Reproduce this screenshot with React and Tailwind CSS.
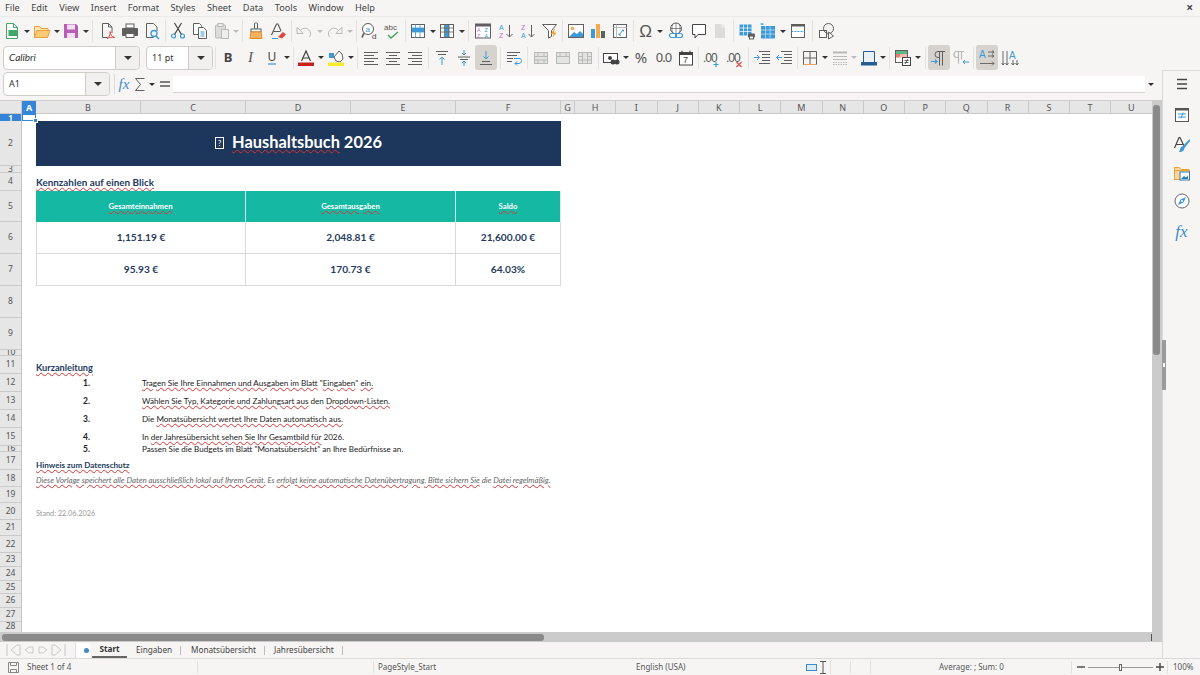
import React from 'react';

const GRAY = '#5f5f5f';
const BLUE = '#3d9ad6';
const LIGHT = '#b9b9b9';

const menus = ['File', 'Edit', 'View', 'Insert', 'Format', 'Styles', 'Sheet', 'Data', 'Tools', 'Window', 'Help'];

const columns = [
  { label: 'B', w: 'w-[105px]' },
  { label: 'C', w: 'w-[105px]' },
  { label: 'D', w: 'w-[105px]' },
  { label: 'E', w: 'w-[105px]' },
  { label: 'F', w: 'w-[105px]' },
  { label: 'G', w: 'w-[14px]' },
  { label: 'H', w: 'w-[41.25px]' },
  { label: 'I', w: 'w-[41.25px]' },
  { label: 'J', w: 'w-[41.25px]' },
  { label: 'K', w: 'w-[41.25px]' },
  { label: 'L', w: 'w-[41.25px]' },
  { label: 'M', w: 'w-[41.25px]' },
  { label: 'N', w: 'w-[41.25px]' },
  { label: 'O', w: 'w-[41.25px]' },
  { label: 'P', w: 'w-[41.25px]' },
  { label: 'Q', w: 'w-[41.25px]' },
  { label: 'R', w: 'w-[41.25px]' },
  { label: 'S', w: 'w-[41.25px]' },
  { label: 'T', w: 'w-[41.25px]' },
  { label: 'U', w: 'w-[41.25px]' },
];

const rows = [
  { n: 2, h: 'h-[45px]' },
  { n: 3, h: 'h-[7px]' },
  { n: 4, h: 'h-[18px]' },
  { n: 5, h: 'h-[31px]' },
  { n: 6, h: 'h-[32px]' },
  { n: 7, h: 'h-[32px]' },
  { n: 8, h: 'h-[32px]' },
  { n: 9, h: 'h-[32px]' },
  { n: 10, h: 'h-[6px]' },
  { n: 11, h: 'h-[18px]' },
  { n: 12, h: 'h-[18px]' },
  { n: 13, h: 'h-[18px]' },
  { n: 14, h: 'h-[18px]' },
  { n: 15, h: 'h-[18px]' },
  { n: 16, h: 'h-[6px]' },
  { n: 17, h: 'h-[18px]' },
  { n: 18, h: 'h-[17px]' },
  { n: 19, h: 'h-[16px]' },
  { n: 20, h: 'h-[17px]' },
  { n: 21, h: 'h-[16px]' },
  { n: 22, h: 'h-[17px]' },
  { n: 23, h: 'h-[14px]' },
  { n: 24, h: 'h-[13.5px]' },
  { n: 25, h: 'h-[13.5px]' },
  { n: 26, h: 'h-[14px]' },
  { n: 27, h: 'h-[13.5px]' },
  { n: 28, h: 'h-[11px]' },
];

// misspelled words get the red squiggle like in the Calc window
const Sp = ({ children }) => (
  <span className="underline decoration-wavy decoration-[#d33] decoration-1 underline-offset-1">{children}</span>
);

const Ic = ({ children }) => (
  <svg width="18" height="18" viewBox="0 0 18 18" fill="none" strokeWidth="1" className="overflow-visible">
    {children}
  </svg>
);

const B = ({ w = 'w-[22px]', active = false, children }) => (
  <div className={`${w} h-[25px] shrink-0 flex items-center justify-center rounded-[3px] ${active ? 'bg-[#d6d3cf]' : ''}`}>
    {children}
  </div>
);

const Dd = ({ w = 'w-[8px]', light = false }) => (
  <div className={`${w} h-[25px] shrink-0 flex items-center justify-center`}>
    <div className={`w-0 h-0 border-x-[3px] border-x-transparent border-t-[3px] ${light ? 'border-t-[#bbb]' : 'border-t-[#333]'}`} />
  </div>
);

const Sep = ({ w = 'w-[5px]' }) => (
  <div className={`${w} h-[24px] shrink-0 flex items-center justify-center`}>
    <div className="w-px h-[22px] bg-[#e4e2df]" />
  </div>
);

const ComboArrow = ({ w }) => (
  <div className={`${w} h-full border-l border-[#d0cdc9] bg-[#f1f0ee] rounded-r-[4px] flex items-center justify-center`}>
    <div className="w-0 h-0 border-x-[4px] border-x-transparent border-t-[4px] border-t-[#333]" />
  </div>
);

const Lines = ({ rows: r }) => (
  <Ic>
    {r.map(([x1, x2, y], i) => (
      <path key={i} d={`M${x1} ${y}H${x2}`} stroke={GRAY} />
    ))}
  </Ic>
);

const TableIcon = ({ kind }) => (
  <Ic>
    <rect x="2.5" y="2.5" width="13" height="13" fill="#fff" stroke={GRAY} />
    {kind === 'row' && <rect x="3" y="6" width="12" height="4" fill={BLUE} />}
    {kind === 'col' && <rect x="7" y="3" width="4" height="12" fill={BLUE} />}
    <path d="M2.5 6h13M2.5 10h13M6.5 2.5v13M11 2.5v13" stroke={kind === 'row' ? BLUE : GRAY} strokeWidth="0.8" />
  </Ic>
);

const MergeIcon = ({ d }) => (
  <Ic>
    <rect x="2.5" y="3.5" width="13" height="11" fill="#e3e3e1" stroke={LIGHT} />
    <path d={d} stroke={LIGHT} />
  </Ic>
);

const Toolbar1 = () => (
  <div className="h-[28px] pl-px flex items-center">
    <B><Ic><path d="M3.5 1.5h7l4 4v11h-11z" fill="#fff" stroke="#43a66b" /><path d="M10.5 1.5v4h4" stroke="#43a66b" /><rect x="5.5" y="8" width="9" height="6" fill="#43a66b" /></Ic></B>
    <Dd />
    <B><Ic><path d="M1.5 15.5v-11h5l1.5 2h7v2" fill="#fde3ad" stroke="#e9a13b" /><path d="M1.5 15.5l2.5-7h13l-2.5 7z" fill="#fcc978" stroke="#e9a13b" /></Ic></B>
    <Dd w="w-[7px]" />
    <B><Ic><path d="M2 2h12l2 2v12H2z" fill="#b75fb5" /><rect x="5" y="2.5" width="8" height="5" fill="#f3dff3" /><rect x="5" y="11" width="8" height="5" fill="#f3dff3" /></Ic></B>
    <Dd />
    <Sep />
    <B w="w-[23px]"><Ic><path d="M4.5 1.5h6l3.5 3.5v6" stroke={GRAY} fill="#fff" /><path d="M4.5 1.5v14h5" stroke={GRAY} /><path d="M10.5 1.5V5H14" stroke={GRAY} /><path d="M9 16.5c3-2 3.5-5 3-7 .5 3 1.5 5 4.5 6-2.500-.5-5.500-.2-7.500 1z" stroke="#d8463f" /></Ic></B>
    <B w="w-[23px]"><Ic><rect x="5" y="2" width="8" height="4" fill="#fff" stroke={GRAY} /><path d="M1.500 6.500h15v7h-3v-2h-9v2h-3z" fill={GRAY} stroke={GRAY} /><rect x="5" y="11.500" width="8" height="4" fill="#fff" stroke={GRAY} /></Ic></B>
    <B><Ic><path d="M3.500 1.500h7l3.500 3.500v4M3.500 1.500v14h7" stroke={GRAY} /><circle cx="11" cy="11.500" r="3" stroke={BLUE} strokeWidth="1.300" /><path d="M13 14l3 3" stroke={BLUE} strokeWidth="1.500" /></Ic></B>
    <Sep w="w-[4px]" />
    <B><Ic><circle cx="4.500" cy="14" r="2" stroke={BLUE} strokeWidth="1.200" /><circle cx="13.500" cy="14" r="2" stroke={BLUE} strokeWidth="1.200" /><path d="M5.500 12.500L12.500 1M12.500 12.500L5.500 1" stroke="#444" strokeWidth="1.200" /></Ic></B>
    <B><Ic><path d="M2.500 1.500h6l2 2v9h-8z" fill="#fff" stroke={GRAY} /><path d="M7.500 5.500h5l3 3v8h-8z" fill="#fff" stroke={GRAY} /><path d="M9.500 10h4M9.500 12h4M9.500 14h4" stroke={BLUE} /></Ic></B>
    <B><Ic><rect x="2.500" y="3" width="10" height="13" rx="1" fill="#dcdcda" stroke={LIGHT} /><rect x="5" y="1.500" width="5" height="3" fill="#eee" stroke={LIGHT} /><path d="M8.500 7.500h7v9h-7z" fill="#eee" stroke={LIGHT} /></Ic></B>
    <Dd w="w-[6px]" light />
    <Sep w="w-[6px]" />
    <B><Ic><rect x="7.500" y="1" width="3" height="6" rx="1" fill="#fff" stroke={GRAY} /><rect x="4" y="7" width="10" height="3" fill="#fff" stroke={GRAY} /><path d="M4 10h10l1 6.500H3z" fill="#f6b25e" stroke="#e08e2d" /></Ic></B>
    <B><Ic><path d="M2.500 13L7.500 2h1.500l3 7M4.500 9.500h7" stroke={GRAY} strokeWidth="1.200" /><path d="M9 15l5-5 3 2.500-4 4z" fill="#e0453e" /><path d="M3 16.500h6" stroke={BLUE} /></Ic></B>
    <Sep w="w-[4px]" />
    <B><Ic><path d="M5.500 8.500L2 5.500v6h6L5.500 8.500c2.500-3 7-3.500 9.500 1 1 2 .5 4-.5 5.500" stroke={LIGHT} /></Ic></B>
    <Dd w="w-[9px]" light />
    <B><Ic><path d="M12.500 8.500L16 5.500v6h-6l2.500-3c-2.500-3-7-3.500-9.500 1-1 2-.5 4 .5 5.500" stroke={LIGHT} /></Ic></B>
    <Dd w="w-[7px]" light />
    <Sep w="w-[6px]" />
    <B><Ic><circle cx="7" cy="7" r="5.500" fill="#fff" stroke={GRAY} /><path d="M3 11L1 15.500" stroke={GRAY} strokeWidth="1.800" /><text x="4.500" y="9.500" fontSize="8" fill={BLUE} fontFamily="Liberation Sans">a</text><text x="11" y="17" fontSize="8" fill="#444" fontFamily="Liberation Sans">d</text></Ic></B>
    <B><Ic><text x="1" y="7.500" fontSize="8" fill="#555" fontFamily="Liberation Sans">abc</text><path d="M5 13l3 3 7-6" stroke="#3ea968" strokeWidth="1.500" /></Ic></B>
    <Sep w="w-[4px]" />
    <B><TableIcon kind="row" /></B>
    <Dd w="w-[7px]" />
    <B><TableIcon kind="col" /></B>
    <Dd w="w-[7px]" />
    <Sep w="w-[6px]" />
    <B w="w-[23px]"><Ic><rect x="1.500" y="2" width="15" height="14" fill="#fff" stroke={GRAY} /><rect x="1.500" y="2" width="15" height="2.500" fill={GRAY} /><text x="3" y="9.500" fontSize="5.500" fill="#c86bcc" fontFamily="Liberation Sans">A</text><text x="3" y="15.500" fontSize="5.500" fill="#c86bcc" fontFamily="Liberation Sans">Z</text><text x="10.500" y="9.500" fontSize="5.500" fill={BLUE} fontFamily="Liberation Sans">Z</text><text x="10.500" y="15.500" fontSize="5.500" fill={BLUE} fontFamily="Liberation Sans">A</text></Ic></B>
    <B w="w-[23px]"><Ic><text x="2" y="7.500" fontSize="7" fill={BLUE} fontFamily="Liberation Sans">A</text><text x="2" y="15.500" fontSize="7" fill="#c86bcc" fontFamily="Liberation Sans">Z</text><path d="M12.500 3v12M9.500 12l3 3 3-3" stroke={GRAY} /></Ic></B>
    <B><Ic><text x="2" y="7.500" fontSize="7" fill="#c86bcc" fontFamily="Liberation Sans">Z</text><text x="2" y="15.500" fontSize="7" fill={BLUE} fontFamily="Liberation Sans">A</text><path d="M12.500 3v12M9.500 12l3 3 3-3" stroke={GRAY} /></Ic></B>
    <B w="w-[21px]"><Ic><path d="M1.500 2.500h14l-5 6v6l-3 1.500v-7.500z" fill="#fff" stroke={GRAY} /><path d="M13 7l-3 5h2.500l-1 4 4-5.500h-2.500l1-3.500z" fill="#f2a43a" /></Ic></B>
    <Sep />
    <B><Ic><rect x="1.500" y="2.500" width="15" height="13" fill="#fff" stroke={GRAY} /><circle cx="5.500" cy="6.500" r="1.800" fill="#f5a94b" /><path d="M2 15l5-5 3 2 3-3 3 3v3z" fill={BLUE} /></Ic></B>
    <B><Ic><rect x="2" y="7" width="4" height="9" fill={BLUE} /><rect x="7" y="2" width="4" height="14" fill="#f2a94f" /><rect x="12" y="9" width="4" height="7" fill={GRAY} /></Ic></B>
    <B><Ic><rect x="2.500" y="2.500" width="13" height="13" fill="#fff" stroke={GRAY} /><path d="M2.500 5.500h13M5.500 2.500v13" stroke={LIGHT} /><path d="M8 13l4-5M11 8h1.500v1.500M8 13h2M8 13v-1.500" stroke={BLUE} /></Ic></B>
    <Sep w="w-[4px]" />
    <B w="w-[21px]"><span className="font-['Liberation_Sans'] text-[17px] leading-none text-[#555]">Ω</span></B>
    <Dd />
    <B w="w-[24px]"><Ic><circle cx="9" cy="6.500" r="5.500" fill="#fff" stroke={GRAY} /><path d="M3.500 6.500h11M9 1v11M6 2c-1.500 3-1.500 6 0 9M12 2c1.500 3 1.500 6 0 9" stroke={GRAY} strokeWidth="0.700" /><rect x="2.500" y="11.500" width="7" height="4" rx="2" fill="#fff" stroke={BLUE} strokeWidth="1.200" /><rect x="8.500" y="11.500" width="7" height="4" rx="2" stroke={BLUE} strokeWidth="1.200" /></Ic></B>
    <B w="w-[21px]"><Ic><path d="M2.500 2.500h13v10H8l-3 3.500v-3.500H2.500z" fill="#fff" stroke="#444" /></Ic></B>
    <B><Ic><path d="M4 2h7l3 3v11H4z" fill="#dedcda" /><path d="M11 2v3h3" stroke="#f4f4f4" /></Ic></B>
    <Sep />
    <B><Ic><rect x="1.500" y="2.500" width="12" height="11" fill={BLUE} /><path d="M1.500 6h12M1.500 9.500h12M5.500 2.500v11M9.500 2.500v11" stroke="#fff" strokeWidth="0.700" /><rect x="10" y="11.500" width="7" height="4" rx="1" fill={GRAY} /><rect x="11.500" y="14" width="4" height="3" fill="#fff" stroke={GRAY} /></Ic></B>
    <B w="w-[19px]"><Ic><rect x="2" y="4" width="14" height="12.500" fill={BLUE} /><path d="M2 8h14M2 12h14M6.500 4v12M11 4v12" stroke="#cfe6f5" strokeWidth="0.700" /><path d="M3 3V1.500M1.500 2h3" stroke={BLUE} /></Ic></B>
    <Dd w="w-[11px]" />
    <B w="w-[20px]"><Ic><rect x="2.500" y="2.500" width="13" height="13" fill="#fff" stroke={GRAY} /><rect x="2.500" y="2.500" width="13" height="2" fill={GRAY} /><path d="M2.500 9.500h13" stroke={BLUE} strokeDasharray="2 1" /></Ic></B>
    <Sep w="w-[8px]" />
    <B><Ic><rect x="1.500" y="8.500" width="7" height="7" fill="#fff" stroke={GRAY} /><circle cx="10.500" cy="6.500" r="5" stroke={GRAY} /><path d="M10.500 10l5 4 -5 3z" fill="#fff" stroke={GRAY} /></Ic></B>
  </div>
);

const Toolbar2 = () => (
  <div className="h-[25px] pl-[3px] flex items-center">
    <div className="w-[137px] h-[24px] shrink-0 flex bg-white border border-[#d0cdc9] rounded-[4px]">
      <div className="flex-1 pl-[5px] flex items-center font-['Lato'] italic text-[10px] text-[#333]">Calibri</div>
      <ComboArrow w="w-[24px]" />
    </div>
    <div className="w-[67px] h-[24px] ml-[6px] shrink-0 flex bg-white border border-[#d0cdc9] rounded-[4px]">
      <div className="flex-1 pl-[5px] flex items-center text-[9px] text-[#333]">11 pt</div>
      <ComboArrow w="w-[24px]" />
    </div>
    <Sep w="w-[4px]" />
    <B><span className="font-['Noto_Sans'] font-bold text-[13px] text-[#444]">B</span></B>
    <B w="w-[23px]"><span className="font-['Liberation_Serif'] italic text-[15px] text-[#555]">I</span></B>
    <B w="w-[20px]"><span className="font-['Noto_Sans'] text-[12px] leading-[13px] text-[#444] border-b-2 border-[#8fb8dc]">U</span></B>
    <Dd w="w-[9px]" />
    <Sep w="w-[4px]" />
    <B><Ic><path d="M4.500 12L9 2l4.500 10M6 9h6" stroke="#444" strokeWidth="1.200" /><rect x="1" y="13.500" width="16" height="3.500" fill="#c5221f" /></Ic></B>
    <Dd />
    <B><Ic><rect x="2" y="4" width="5" height="5" fill={BLUE} /><path d="M7 8l5-6 3 3 1 5-3 3-4-1z" fill="#fff" stroke={GRAY} /><rect x="1" y="13.500" width="16" height="3.500" fill="#f6ec2f" /></Ic></B>
    <Dd />
    <Sep />
    <B><Lines rows={[[2, 16, 3.500], [2, 12, 6.500], [2, 16, 9.500], [2, 12, 12.500], [2, 16, 15.500]]} /></B>
    <B><Lines rows={[[2, 16, 3.500], [5, 13, 6.500], [2, 16, 9.500], [5, 13, 12.500], [2, 16, 15.500]]} /></B>
    <B><Lines rows={[[2, 16, 3.500], [6, 16, 6.500], [2, 16, 9.500], [6, 16, 12.500], [2, 16, 15.500]]} /></B>
    <Sep />
    <B><Ic><path d="M3 2.500h12M5 5.500h8" stroke={GRAY} /><path d="M9 16V8M6.500 10.500L9 8l2.500 2.500" stroke={BLUE} /></Ic></B>
    <B><Ic><path d="M3 8h12M5 10.500h8" stroke={GRAY} /><path d="M9 1v5M7 4l2 2 2-2M9 17v-5M7 14l2-2 2 2" stroke={BLUE} /></Ic></B>
    <B active><Ic><path d="M3 15.500h12M5 12.500h8" stroke={GRAY} /><path d="M9 2v8M6.500 7.500L9 10l2.500-2.500" stroke={BLUE} /></Ic></B>
    <Sep w="w-[6px]" />
    <B><Ic><path d="M2 3.500h13M2 6.500h10M2 9.500h6M2 12.500h5" stroke={GRAY} /><path d="M9 9.500h6c2 0 2 5-1 5h-4M12 12.500l-2 2 2 2" stroke={BLUE} /></Ic></B>
    <Sep />
    <B><MergeIcon d="M2.500 7.500h13M2.500 11h13M6 3.500v4M12 3.500v4M6 11v3.500M12 11v3.500" /></B>
    <B><MergeIcon d="M2.500 7.500h13M6 3.500v4M12 3.500v4" /></B>
    <B><MergeIcon d="M2.500 7.500h4M11.500 7.500h4M2.500 11h13M6.500 3.500v11M11.500 3.500v11" /></B>
    <Sep w="w-[4px]" />
    <B><Ic><rect x="1.500" y="4.500" width="14" height="9" fill="#fff" stroke="#444" /><circle cx="8" cy="9" r="2" fill="#444" /><circle cx="11" cy="13" r="2.500" fill="#444" /><circle cx="15" cy="13" r="2.500" fill="#444" /></Ic></B>
    <Dd />
    <B><span className="font-['Noto_Sans'] text-[15px] text-[#555]">%</span></B>
    <B w="w-[23px]"><span className="font-['Noto_Sans'] text-[13px] tracking-[-1px] text-[#555]">0.0</span></B>
    <B w="w-[21px]"><Ic><rect x="2.500" y="3.500" width="13" height="12.500" fill="#fff" stroke="#444" /><path d="M2.500 5h13" stroke="#444" strokeWidth="2" /><path d="M5 1.500v3M13 1.500v3" stroke="#444" /><text x="6" y="14" fontSize="9" fill="#444" fontFamily="Liberation Sans">7</text></Ic></B>
    <Sep />
    <B><Ic><text x="0" y="13" fontSize="12" letterSpacing="-1" fill="#555" fontFamily="Liberation Sans">.00</text><path d="M13 13v5M10.500 15.500h5" stroke={BLUE} strokeWidth="1.200" /></Ic></B>
    <B w="w-[23px]"><Ic><text x="0" y="13" fontSize="12" letterSpacing="-1" fill="#555" fontFamily="Liberation Sans">.00</text><path d="M10.500 13l5 5M15.500 13l-5 5" stroke="#df4a42" strokeWidth="1.200" /></Ic></B>
    <Sep />
    <B><Ic><path d="M6 2.500h11M9 5.500h8M9 8.500h8M9 11.500h8M6 14.500h11" stroke={GRAY} /><path d="M1 8.500h5M4 6l2.500 2.500L4 11" stroke={BLUE} /></Ic></B>
    <B><Ic><path d="M6 2.500h11M9 5.500h8M9 8.500h8M9 11.500h8M6 14.500h11" stroke={GRAY} /><path d="M7 8.500H1.500M4 6L1.500 8.500 4 11" stroke={BLUE} /></Ic></B>
    <Sep w="w-[4px]" />
    <B><Ic><path d="M2.500 2.500h13v13h-13zM9 2.500v13M2.500 9h13" stroke={GRAY} /><path d="M2.500 15.500h13" stroke="#e8a161" /></Ic></B>
    <Dd />
    <B w="w-[21px]"><Ic><path d="M2 3.500h14" stroke={LIGHT} strokeWidth="2" /><path d="M2 7.500h14M2 10.500h14" stroke={LIGHT} /><path d="M2 13.500h14M2 15.500h14" stroke={LIGHT} strokeDasharray="1.500 1" /></Ic></B>
    <Dd light />
    <B w="w-[21px]"><Ic><path d="M3.500 2.500h11v11h-11z" fill="#e9f1f7" stroke="#255d92" /><rect x="1" y="13" width="16" height="3.500" rx="0.500" fill="#255d92" /></Ic></B>
    <Dd />
    <Sep />
    <B><Ic><rect x="1.500" y="1.500" width="12" height="12" fill="#fff" stroke={GRAY} /><rect x="2" y="2" width="11" height="3" fill="#5cb985" /><rect x="2" y="5" width="4" height="3.500" fill="#ea7c74" /><rect x="6" y="5" width="7" height="3.500" fill="#f5b9b0" /><rect x="8.500" y="8.500" width="8" height="8" fill="#fff" stroke="#444" /><path d="M10.500 11.500h4M10.500 13.500h4M11 15l3-5" stroke="#444" strokeWidth="0.800" /></Ic></B>
    <Dd />
    <Sep w="w-[6px]" />
    <B active><Ic><path d="M9.500 2.500v14M12.500 2.500v14M15 2.500H8a3 3 0 0 0 0 6h1.500" stroke={GRAY} /><path d="M1 12.500h6M5 10.500l2 2-2 2" stroke={BLUE} strokeWidth="1.200" /></Ic></B>
    <B w="w-[21px]"><Ic><path d="M6.500 2.500v12M9.500 2.500v8M12 2.500H5a3 3 0 0 0 0 6h1.500" stroke={LIGHT} strokeWidth="1.200" /><path d="M17 13H11M13 11l-2 2 2 2" stroke={BLUE} /></Ic></B>
    <Sep />
    <B active><Ic><text x="1" y="9" fontSize="10" fill={BLUE} fontFamily="Liberation Sans">A</text><path d="M10 3h6M14 1.500L16 3l-2 1.500M10 7h6M14 5.500L16 7l-2 1.500M2 14.500h14M14 12.500l2 2-2 2" stroke={GRAY} strokeWidth="0.900" /></Ic></B>
    <B><Ic><text x="9" y="10" fontSize="10" fill={BLUE} fontFamily="Liberation Sans">A</text><path d="M3 2v14M1.500 14L3 16l1.500-2M7 2v14M5.500 14L7 16l1.500-2M13 11v5M11.500 14l1.500 2 1.500-2M17 11v5M15.500 14l1.500 2 1.500-2" stroke={GRAY} strokeWidth="0.900" /></Ic></B>
  </div>
);

const FormulaBar = () => (
  <div className="h-[30px] pl-[3px] pt-[2px] pb-1 flex items-center shrink-0">
    <div className="w-[107px] h-[24px] shrink-0 flex bg-white border border-[#d0cdc9] rounded-[4px]">
      <div className="flex-1 pl-[5px] flex items-center text-[9px] text-[#333]">A1</div>
      <ComboArrow w="w-[24px]" />
    </div>
    <div className="w-px h-[20px] ml-1 bg-[#dedcd9]" />
    <div className="w-[18px] flex justify-center font-['Liberation_Serif'] italic text-[15px] text-[#3d8cc9]">fx</div>
    <div className="w-[14px] flex justify-center">
      <Ic><path d="M13.500 3.500h-9l5 6-5 6h9" stroke={GRAY} /></Ic>
    </div>
    <Dd w="w-[10px]" />
    <div className="w-[16px] flex justify-center">
      <Ic><path d="M4 7h10M4 11h10" stroke="#555" strokeWidth="1.500" /></Ic>
    </div>
    <div className="w-[972px] h-[17px] shrink-0 bg-white border-b border-[#d6d3cf]" />
    <Dd w="w-[12px]" />
  </div>
);

const ColumnHeader = () => (
  <div className="h-[14px] flex shrink-0 bg-[#e6e6e6] border-t border-[#cfcfcf]">
    <div className="w-[22px] shrink-0 border-r border-b border-[#c9c9c9]" />
    <div className="w-[14px] shrink-0 bg-[#3584d8] text-white font-bold text-[9px] leading-[13px] text-center">A</div>
    {columns.map((c) => (
      <div key={c.label} className={`${c.w} shrink-0 border-r border-b border-[#c9c9c9] text-[9px] leading-[13px] text-center text-[#555]`}>
        {c.label}
      </div>
    ))}
  </div>
);

const RowHeader = () => (
  <div className="w-[22px] shrink-0 bg-[#e6e6e6] border-r border-[#c4c4c4] overflow-hidden">
    <div className="h-[7px] bg-[#3584d8] text-white font-bold text-[8px] leading-[7px] text-center">1</div>
    {rows.map((r) => (
      <div key={r.n} className={`${r.h} border-b border-[#cacaca] flex items-center justify-center text-[8.500px] leading-none text-[#555] overflow-hidden`}>
        {r.n}
      </div>
    ))}
  </div>
);

const kpiHead = "flex items-center justify-center bg-[#15b8a3] border-r border-[#d4efe9] text-white font-bold text-[7.700px]";
const kpiCell = "flex items-center justify-center border-r border-b border-[#d9d9d9] font-bold text-[10.200px] text-[#233a5e]";
const stepNum = "col-start-2 flex items-center justify-center pr-[4px] font-bold text-[8.500px] text-[#222]";
const stepText = "col-start-3 pl-px flex items-center whitespace-nowrap text-[8.100px] text-[#222]";
const blockHead = "col-start-2 flex items-center whitespace-nowrap font-bold text-[#233a5e]";

const Cells = () => (
  <div className="relative flex-1 bg-white overflow-hidden grid grid-cols-[14px_105px_105px_105px_105px_105px] grid-rows-[7px_45px_7px_18px_31px_32px_32px_32px_32px_6px_18px_18px_18px_18px_18px_6px_18px_17px_16px_17px] font-['Lato',sans-serif]">
    {/* A1 selection */}
    <div className="col-start-1 row-start-1 border border-[#3584d8] relative z-10">
      <div className="absolute -right-[3px] -bottom-[3px] w-[5px] h-[5px] bg-[#3584d8] border border-white" />
    </div>

    <div className="col-start-2 col-span-5 row-start-2 pb-[2px] bg-[#1d375c] flex items-center justify-center text-white font-bold text-[16.400px]">
      <span className="w-[9px] h-[12px] mr-2 border border-white text-[8px] leading-[10px] text-center font-normal">?</span>
      <Sp>Haushaltsbuch</Sp>&nbsp;2026
    </div>

    <div className={`${blockHead} row-start-4 text-[9.900px]`}><Sp>Kennzahlen auf einen Blick</Sp></div>

    <div className={`${kpiHead} col-start-2 col-span-2 row-start-5`}><Sp>Gesamteinnahmen</Sp></div>
    <div className={`${kpiHead} col-start-4 col-span-2 row-start-5`}><Sp>Gesamtausgaben</Sp></div>
    <div className={`${kpiHead} col-start-6 row-start-5`}><Sp>Saldo</Sp></div>

    <div className={`${kpiCell} col-start-2 col-span-2 row-start-6 border-l`}>1,151.19 €</div>
    <div className={`${kpiCell} col-start-4 col-span-2 row-start-6`}>2,048.81 €</div>
    <div className={`${kpiCell} col-start-6 row-start-6`}>21,600.00 €</div>
    <div className={`${kpiCell} col-start-2 col-span-2 row-start-7 border-l`}>95.93 €</div>
    <div className={`${kpiCell} col-start-4 col-span-2 row-start-7`}>170.73 €</div>
    <div className={`${kpiCell} col-start-6 row-start-7`}>64.03%</div>

    <div className={`${blockHead} row-start-11 pt-[6px] text-[9.200px]`}><Sp>Kurzanleitung</Sp></div>

    <div className={`${stepNum} row-start-12`}>1.</div>
    <div className={`${stepText} row-start-12`}><Sp>Tragen Sie Ihre Einnahmen und Ausgaben im Blatt</Sp>&nbsp;"<Sp>Eingaben</Sp>"&nbsp;<Sp>ein.</Sp></div>
    <div className={`${stepNum} row-start-13`}>2.</div>
    <div className={`${stepText} row-start-13`}><Sp>Wählen Sie Typ, Kategorie und Zahlungsart aus</Sp>&nbsp;den&nbsp;<Sp>Dropdown-Listen.</Sp></div>
    <div className={`${stepNum} row-start-14`}>3.</div>
    <div className={`${stepText} row-start-14`}>Die&nbsp;<Sp>Monatsübersicht wertet Ihre Daten automatisch aus.</Sp></div>
    <div className={`${stepNum} row-start-15`}>4.</div>
    <div className={`${stepText} row-start-15`}>In&nbsp;<Sp>der Jahresübersicht sehen Sie Ihr Gesamtbild für</Sp>&nbsp;2026.</div>
    <div className={`${stepNum} row-start-16`}>5.</div>
    <div className={`${stepText} row-start-16`}>Passen Sie die Budgets im Blatt "Monatsübersicht" an Ihre Bedürfnisse an.</div>

    <div className={`${blockHead} row-start-17 pt-[9px] text-[8.100px]`}><Sp>Hinweis zum Datenschutz</Sp></div>
    <div className="col-start-2 row-start-18 pt-[4px] flex items-center whitespace-nowrap italic text-[7.850px] text-[#666]">
      <Sp>Diese Vorlage speichert alle Daten ausschließlich lokal auf Ihrem Gerät.</Sp>&nbsp;Es&nbsp;<Sp>erfolgt keine automatische Datenübertragung. Bitte sichern Sie</Sp>&nbsp;die&nbsp;<Sp>Datei regelmäßig.</Sp>
    </div>
    <div className="col-start-2 row-start-20 pt-[5px] flex items-center whitespace-nowrap text-[7.300px] text-[#999]">Stand: 22.06.2026</div>
  </div>
);

const Sheet = () => (
  <div className="flex-1 flex min-h-0">
    <div className="flex-1 flex flex-col min-w-0">
      <ColumnHeader />
      <div className="flex-1 flex min-h-0">
        <RowHeader />
        <Cells />
      </div>
    </div>
    {/* vertical scrollbar */}
    <div className="w-[10px] shrink-0 bg-[#cbcbcb] pt-[5px] pl-px">
      <div className="w-[7px] h-[250px] bg-[#8a8a8a] rounded-[3px]" />
    </div>
  </div>
);

const HScroll = () => (
  <div className="h-[10px] shrink-0 bg-[#cbcbcb] flex items-center pl-[2px] pr-[10px]">
    <div className="w-[542px] h-[7px] bg-[#8a8a8a] rounded-[3px]" />
    <div className="ml-auto w-px h-[7px] bg-[#555]" />
  </div>
);

const TabNav = () => (
  <svg width="62" height="14" viewBox="0 0 62 14" fill="none" stroke="#c9c9c9">
    <path d="M2 1v12M12 2L6 7l6 5h3V2zM24 4l-4 3 4 3h4V4zM38 4l4 3-4 3h-4V4zM50 2l6 5-6 5h-3V2zM60 1v12" />
  </svg>
);

const TabBar = () => (
  <div className="h-[16px] shrink-0 flex items-center pl-[5px] text-[8.200px] text-[#444]">
    <TabNav />
    <div className="ml-[8px] w-[15px] h-[15px] relative bg-white border-l border-[#ddd]">
      <div className="absolute right-[1px] top-[5px] w-[5px] h-[5px] rounded-full bg-[#3d8cc9]" />
    </div>
    <div className="ml-[2px] w-[35px] h-[16px] text-center font-bold leading-[14px] text-[#333] border-b-2 border-[#666]">Start</div>
    <div className="ml-[9px] w-[35px] leading-[14px]">Eingaben</div>
    <div className="w-px h-[9px] ml-[9px] bg-[#bbb]" />
    <div className="ml-[10px] w-[63px] leading-[14px] whitespace-nowrap">Monatsübersicht</div>
    <div className="w-px h-[9px] ml-[10px] bg-[#bbb]" />
    <div className="ml-[9px] w-[59px] leading-[14px] whitespace-nowrap">Jahresübersicht</div>
    <div className="w-px h-[9px] ml-[9px] bg-[#bbb]" />
  </div>
);

const Sidebar = () => (
  <div className="relative w-[38px] shrink-0 border-l border-t border-[#dcdad7] flex flex-col items-center">
    <div className="absolute -left-px top-[269px] w-[4px] h-[50px] bg-[#9b9b9b]">
      <div className="absolute left-[1px] top-[23px] w-[2px] h-[4px] bg-white" />
    </div>
    <div className="mt-[4px] h-[18px] flex items-center">
      <Ic><path d="M4 4.500h10M4 9h10M4 13.500h10" stroke="#444" strokeWidth="1.500" /></Ic>
    </div>
    <div className="mt-[13px] h-[18px]">
      <Ic><rect x="2.500" y="2.500" width="13" height="13" fill="#fff" stroke="#555" /><path d="M2.500 3.500h13" stroke="#555" strokeWidth="2" /><path d="M5 8h8M5 11h8M10 6.500l-2 6" stroke={BLUE} /></Ic>
    </div>
    <div className="mt-[12px] h-[18px]">
      <Ic><path d="M1.500 12L6 1.500h1L11 10M3.500 8.500h6" stroke="#444" strokeWidth="1.200" /><path d="M16.500 3L10 10l-2 1-2 5c3 .5 5-1 5.500-4L17 5z" fill={BLUE} /></Ic>
    </div>
    <div className="mt-[10px] h-[18px]">
      <Ic><path d="M1.500 15.500V3.500h5l1.500 2h8v2" fill="#fbd69a" stroke="#e9a13b" /><rect x="1.500" y="6.500" width="15" height="9" fill="#fbd69a" stroke="#e9a13b" /><rect x="7" y="8" width="9.500" height="8" fill="#fff" stroke="#2f79b3" /><path d="M8 15l3-3 2 1.500 2-2v3.500z" fill="#2f79b3" /></Ic>
    </div>
    <div className="mt-[10px] h-[18px]">
      <Ic><circle cx="9" cy="9" r="7" stroke="#666" fill="#fff" /><path d="M13 5L10.500 10.500 5 13 7.500 7.500z" fill={BLUE} /><circle cx="9" cy="9" r="1" fill="#fff" /></Ic>
    </div>
    <div className="mt-[12px] h-[20px] font-['Liberation_Serif'] italic text-[17px] leading-[20px] text-[#3d8cc9]">fx</div>
  </div>
);

const StatusBar = () => (
  <div className="relative h-[17px] shrink-0 flex items-center border-t border-[#dcdad7] text-[8px] text-[#555] whitespace-nowrap">
    <div className="w-[27px] shrink-0 flex justify-center">
      <svg width="13" height="13" viewBox="0 0 13 13" fill="none" stroke="#888"><path d="M1.500 1.500h10v10h-10zM3.500 1.500v3h6v-3M3.500 11.500v-3h6v3" /></svg>
    </div>
    <div className="w-[170px] shrink-0">Sheet 1 of 4</div>
    <div className="w-px h-[13px] bg-[#e2e0dd]" />
    <div className="w-[175px] shrink-0" />
    <div className="w-px h-[13px] mr-[4px] bg-[#e2e0dd]" />
    <div className="w-[258px] shrink-0">PageStyle_Start</div>
    <div className="w-[170px] shrink-0">English (USA)</div>
    <div className="w-[11px] h-[7px] border border-[#3d8cc9] bg-[#dceaf5] shrink-0" />
    <svg className="ml-[2px] shrink-0" width="8" height="13" viewBox="0 0 8 13" fill="none" stroke="#555"><path d="M1 .5h6M1 12.500h6M4 .5v12" /></svg>
    <div className="ml-[3px] w-px h-[13px] bg-[#e2e0dd]" />
    <div className="w-[19px]" />
    <div className="w-px h-[13px] bg-[#e2e0dd]" />
    <div className="w-[19px]" />
    <div className="w-px h-[13px] bg-[#e2e0dd]" />
    <div className="ml-[68px] w-[65px] shrink-0">Average: ; Sum: 0</div>
    <div className="w-[67px] shrink-0" />
    <div className="w-px h-[13px] bg-[#e2e0dd]" />
    <svg className="ml-[4px] shrink-0" width="10" height="10" viewBox="0 0 10 10" stroke="#444" strokeWidth="1.400"><path d="M1 5h8" /></svg>
    <div className="relative ml-[2px] w-[65px] h-px bg-[#999] shrink-0">
      <div className="absolute left-[31px] -top-[3px] w-[3px] h-[7px] border border-[#666] bg-white" />
    </div>
    <svg className="ml-[2px] shrink-0" width="10" height="10" viewBox="0 0 10 10" stroke="#444" strokeWidth="1.400"><path d="M1 5h8M5 1v8" /></svg>
    <div className="ml-[2px] w-px h-[13px] bg-[#e2e0dd]" />
    <div className="ml-[5px]">100%</div>
  </div>
);

export default function App() {
  return (
    <div className="w-[1200px] h-[675px] overflow-hidden flex flex-col bg-[#f6f5f4] font-['Noto_Sans',sans-serif]">
      <div className="h-[17px] shrink-0 flex items-center pl-[5px] pr-[7px] gap-[11.500px] border-b border-[#ebe9e7] text-[9.200px] text-[#444]">
        {menus.map((m) => (
          <span key={m}>{m}</span>
        ))}
        <span className="ml-auto text-[12px] font-bold leading-none text-[#444]">×</span>
      </div>
      <Toolbar1 />
      <Toolbar2 />
      <div className="flex-1 flex min-h-0">
        <div className="flex-1 flex flex-col min-w-0">
          <FormulaBar />
          <Sheet />
          <HScroll />
          <TabBar />
        </div>
        <Sidebar />
      </div>
      <StatusBar />
    </div>
  );
}
